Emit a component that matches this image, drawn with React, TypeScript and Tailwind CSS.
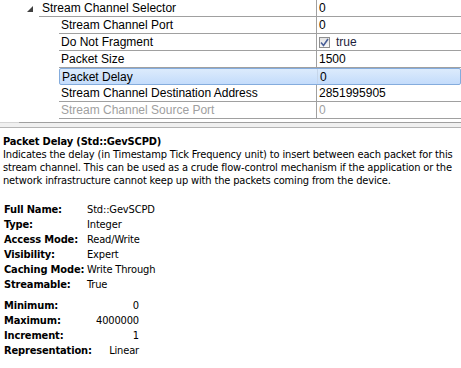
import React from "react";

type T_ROW = {
  name: string;
  value: string;
  disabled?: boolean;
  selected?: boolean;
  check?: boolean;
};

const subRows: T_ROW[] = [
  { name: "Stream Channel Port", value: "0" },
  { name: "Do Not Fragment", value: "true", check: true },
  { name: "Packet Size", value: "1500" },
  { name: "Packet Delay", value: "0", selected: true },
  { name: "Stream Channel Destination Address", value: "2851995905" },
  { name: "Stream Channel Source Port", value: "0", disabled: true },
];

const info: [string, string][] = [
  ["Full Name:", "Std::GevSCPD"],
  ["Type:", "Integer"],
  ["Access Mode:", "Read/Write"],
  ["Visibility:", "Expert"],
  ["Caching Mode:", "Write Through"],
  ["Streamable:", "True"],
];

const limits: [string, string][] = [
  ["Minimum:", "0"],
  ["Maximum:", "4000000"],
  ["Increment:", "1"],
  ["Representation:", "Linear"],
];

const CheckMark = () => (
  <span className="mr-[6px] flex h-[11px] w-[11px] items-center justify-center border border-[#8f8f8f] bg-gradient-to-b from-[#e4e4e4] to-[#f8f8f8]">
    <svg width="9" height="9" viewBox="0 0 9 9">
      <path d="M1 4.5 L3.5 7.5 L8 1" fill="none" stroke="#4a5f97" strokeWidth="1.6" />
    </svg>
  </span>
);

const GridRow = ({ name, value, disabled, selected, check }: T_ROW) => (
  <div className="flex h-[17px]">
    <div className="w-[59px] shrink-0" />
    <div
      className={
        selected
          ? "flex flex-1 rounded-[2px] border border-[#84acdd] bg-gradient-to-b from-[#dcebfc] to-[#c4dcfb]"
          : "flex flex-1 border-b border-[#a0a0a0]"
      }
    >
      <div
        className={
          "flex w-[258px] shrink-0 items-center pl-[2px] " +
          (selected ? "border-r border-[#c6d6ea]" : "border-r border-[#a0a0a0]") +
          (disabled ? " text-[#a0a0a0]" : "")
        }
      >
        {name}
      </div>
      <div className={"flex flex-1 items-center pl-[2px]" + (disabled ? " text-[#a0a0a0]" : "")}>
        {check && <CheckMark />}
        <span className={check ? "text-[#1e1e3c]" : ""}>{value}</span>
      </div>
    </div>
  </div>
);

export default function App() {
  return (
    <div className="h-[368px] w-[461px] overflow-hidden bg-white text-black">
      {/* Property grid */}
      <div className="font-['Liberation_Sans',sans-serif] text-[12px] leading-none">
        <div className="flex h-[17px]">
          <div className="flex w-[39px] shrink-0 items-center justify-end pr-[6px]">
            <svg width="6" height="6" viewBox="0 0 6 6">
              <path d="M6 0 L6 6 L0 6 Z" fill="#404040" />
            </svg>
          </div>
          <div className="flex flex-1 border-b border-[#a0a0a0]">
            <div className="flex w-[278px] shrink-0 items-center border-r border-[#a0a0a0] pl-[3px]">
              Stream Channel Selector
            </div>
            <div className="flex flex-1 items-center pl-[2px]">0</div>
          </div>
        </div>
        {subRows.map((r) => (
          <GridRow key={r.name} {...r} />
        ))}
      </div>

      {/* Splitter */}
      <div className="mt-[3px] flex h-[6px] flex-col">
        <div className="flex h-px">
          <div className="w-[19px] bg-[#d4d4d4]" />
          <div className="flex-1 bg-[#a0a0a0]" />
        </div>
        <div className="flex-1 bg-[#f0f0f0]" />
        <div className="h-px bg-[#b4b4b4]" />
      </div>

      {/* Description */}
      <div className="px-[3px] pt-[7px] font-['DejaVu_Sans_Condensed','DejaVu_Sans',sans-serif] text-[11px] leading-[13px] tracking-[-0.15px] [font-stretch:semi-condensed]">
        <div className="font-bold">Packet Delay (Std::GevSCPD)</div>
        <div className="w-[456px]">
          Indicates the delay (in Timestamp Tick Frequency unit) to insert between each packet for this
          stream channel. This can be used as a crude flow-control mechanism if the application or the
          network infrastructure cannot keep up with the packets coming from the device.
        </div>

        <div className="mt-[15px] flex flex-col pl-[1px]">
          {info.map(([k, v]) => (
            <div key={k} className="flex h-[15px] items-center whitespace-nowrap">
              <span className="w-[83px] shrink-0 font-bold">{k}</span>
              <span>{v}</span>
            </div>
          ))}
        </div>

        <div className="mt-[6px] flex w-[136px] flex-col pl-[1px]">
          {limits.map(([k, v]) => (
            <div key={k} className="flex h-[15px] items-center justify-between whitespace-nowrap">
              <span className="font-bold">{k}</span>
              <span>{v}</span>
            </div>
          ))}
        </div>
      </div>
    </div>
  );
}
